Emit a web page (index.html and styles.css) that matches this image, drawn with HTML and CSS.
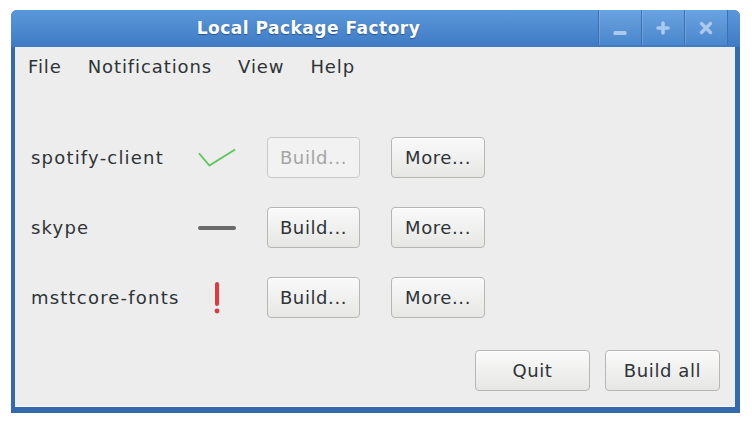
FILE: index.html
```html
<!DOCTYPE html>
<html>
<head>
<meta charset="utf-8">
<link rel="stylesheet" href="styles.css">
</head>
<body>
<div class="window">
  <div class="titlebar">
    <div class="title">Local Package Factory</div>
    <div class="wm-buttons">
      <div class="wm-btn"><svg width="14" height="16" viewBox="0 0 14 16"><rect x="0.5" y="11" width="13" height="4" rx="1" fill="#a9c9ef"/></svg></div>
      <div class="wm-btn"><svg width="14" height="14" viewBox="0 0 14 14"><path d="M7 2v10M2 7h10" stroke="#a9c9ef" stroke-width="3.6" stroke-linecap="round"/></svg></div>
      <div class="wm-btn"><svg width="14" height="14" viewBox="0 0 14 14"><path d="M2.5 2.5l9 9M11.5 2.5l-9 9" stroke="#a9c9ef" stroke-width="3.4" stroke-linecap="round"/></svg></div>
    </div>
  </div>
  <div class="content">
    <div class="menubar">
      <span class="menu-item">File</span>
      <span class="menu-item">Notifications</span>
      <span class="menu-item">View</span>
      <span class="menu-item">Help</span>
    </div>
    <div class="packages">
      <div class="pkg-name">spotify-client</div>
      <div class="status"><svg width="40" height="22" viewBox="0 0 40 22"><path d="M1 6l11 13L39 2" fill="none" stroke="#5cc75a" stroke-width="2"/></svg></div>
      <button class="btn disabled">Build...</button>
      <button class="btn">More...</button>

      <div class="pkg-name">skype</div>
      <div class="status"><svg width="40" height="6" viewBox="0 0 40 6"><path d="M2 3h36" stroke="#6a6a6a" stroke-width="4" stroke-linecap="round"/></svg></div>
      <button class="btn">Build...</button>
      <button class="btn">More...</button>

      <div class="pkg-name">msttcore-fonts</div>
      <div class="status"><svg width="10" height="34" viewBox="0 0 10 34"><path d="M5 3v20" stroke="#e2383b" stroke-width="4" stroke-linecap="round"/><circle cx="5" cy="30" r="2.4" fill="#e2383b"/></svg></div>
      <button class="btn">Build...</button>
      <button class="btn">More...</button>
    </div>
    <div class="footer">
      <button class="btn wide">Quit</button>
      <button class="btn wide">Build all</button>
    </div>
  </div>
</div>
</body>
</html>
```
FILE: styles.css
```css
html, body {
  margin: 0;
  padding: 0;
  background: #ffffff;
}
body {
  font-family: "DejaVu Sans", "Noto Sans", sans-serif;
  color: #2e3436;
}
.window {
  margin: 10px 0 0 11px;
  width: 729px;
  height: 403px;
  box-sizing: border-box;
  background: #3469ad;
  border-radius: 6px 6px 0 0;
  padding: 0 5px 6px 4px;
  display: flex;
  flex-direction: column;
}
.titlebar {
  height: 37px;
  display: flex;
  align-items: stretch;
  background: linear-gradient(#5b97da, #3f7bc4);
  margin: 0 -5px 0 -4px;
  border-radius: 6px 6px 0 0;
  padding-right: 12px;
}
.title {
  flex: 1;
  text-align: center;
  color: #ffffff;
  font-weight: bold;
  font-size: 17px;
  letter-spacing: 0.5px;
  line-height: 37px;
  padding-left: 8px;
  text-shadow: 0 1px 1px rgba(20, 50, 100, 0.6);
}
.wm-buttons {
  display: flex;
  height: 35px;
  border-left: 1px solid #3a70b4;
}
.wm-btn {
  width: 42px;
  display: flex;
  align-items: center;
  justify-content: center;
  background: linear-gradient(#6aa3e0, #4a86cc);
  border-right: 1px solid #3a70b4;
  box-shadow: inset 1px 0 0 rgba(255,255,255,0.15);
}
.content {
  flex: 1;
  background: #ededed;
  display: flex;
  flex-direction: column;
  border-bottom: 1px solid #f9f9f9;
}
.menubar {
  height: 38px;
  display: flex;
  align-items: center;
  padding-left: 13px;
  font-size: 18px;
  letter-spacing: 0.9px;
}
.menu-item {
  margin-right: 26px;
  color: #2e3436;
}
.packages {
  display: grid;
  grid-template-columns: 136px 38px 93px 94px;
  grid-auto-rows: 41px;
  column-gap: 31px;
  row-gap: 29px;
  padding: 52px 0 0 16px;
  align-items: center;
}
.pkg-name {
  font-size: 18px;
  letter-spacing: 1.2px;
  white-space: nowrap;
  color: #2e3436;
}
.status {
  display: flex;
  justify-content: center;
  align-items: center;
}
.btn {
  font-family: "DejaVu Sans", "Noto Sans", sans-serif;
  font-size: 18px;
  letter-spacing: 0.6px;
  color: #2e3436;
  height: 41px;
  box-sizing: border-box;
  border: 1px solid #b6b6b3;
  border-radius: 4px;
  background: linear-gradient(#fafafa, #e6e6e5);
  box-shadow: inset 0 1px 0 #ffffff;
  padding: 0;
  margin: 0;
}
.btn.disabled {
  color: #a5a5a5;
  background: #f2f2f2;
  border-color: #c9c9c7;
  box-shadow: none;
}
.footer {
  margin-top: auto;
  display: flex;
  justify-content: flex-end;
  gap: 15px;
  padding: 0 15px 15px 0;
}
.btn.wide {
  width: 115px;
}
```
